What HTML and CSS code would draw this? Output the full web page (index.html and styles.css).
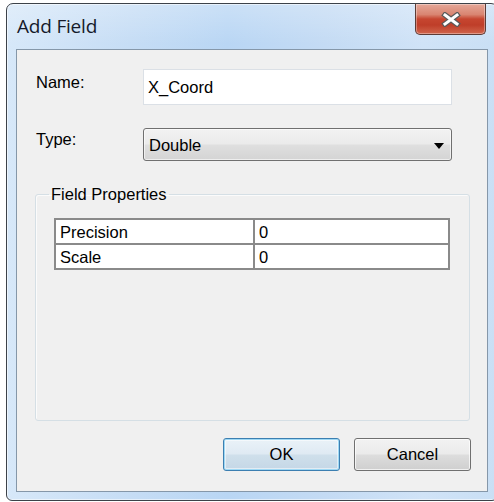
FILE: index.html
```html
<!DOCTYPE html>
<html lang="en">
<head>
<meta charset="utf-8">
<title>Add Field</title>
<link rel="stylesheet" href="styles.css">
</head>
<body>
<div class="window">
  <div class="titlebar">
    <span class="title">Add Field</span>
    <button class="close" type="button" aria-label="Close">
      <svg width="20" height="15" viewBox="0 0 20 15">
        <path d="M4 3 L16 12 M16 3 L4 12" stroke="#5a5a5a" stroke-width="5.4" stroke-linecap="square" fill="none"/>
        <path d="M4 3 L16 12 M16 3 L4 12" stroke="#ffffff" stroke-width="3" stroke-linecap="square" fill="none"/>
      </svg>
    </button>
  </div>
  <div class="client">
    <div class="form">
      <label class="label label-name">Name:</label>
      <div class="textbox">X_Coord</div>
      <label class="label label-type">Type:</label>
      <div class="combo">
        <span>Double</span>
        <svg class="arrow" width="10" height="6" viewBox="0 0 10 6"><polygon points="0,0 10,0 5,6" fill="#000"/></svg>
      </div>
    </div>
    <fieldset class="group">
      <legend>Field Properties</legend>
      <table class="props">
        <tr><td class="key">Precision</td><td>0</td></tr>
        <tr><td class="key">Scale</td><td>0</td></tr>
      </table>
    </fieldset>
    <div class="buttons">
      <button class="btn btn-default" type="button">OK</button>
      <button class="btn" type="button">Cancel</button>
    </div>
  </div>
</div>
</body>
</html>
```

FILE: styles.css
```css
* { box-sizing: border-box; }

html, body {
  margin: 0;
  padding: 0;
}

body {
  width: 494px;
  height: 502px;
  overflow: hidden;
  background: #ffffff;
  font-family: "Liberation Sans", Arial, sans-serif;
  font-size: 16.5px;
  color: #000;
}

/* Aero glass frame */
.window {
  margin: 3px 0 0 6px;
  width: 492px;
  height: 498px;
  border: 1px solid #3c4249;
  border-radius: 7px 7px 6px 6px;
  padding: 0 9px 8px 9px;
  display: flex;
  flex-direction: column;
  background:
    linear-gradient(180deg, rgba(255,255,255,0.25) 0, rgba(255,255,255,0) 40px),
    linear-gradient(90deg, #d7e8f9 0%, #c6ddf5 25%, #b9d6f4 45%, #c4dbf4 65%, #d0e3f7 85%, #c9dff5 100%);
  box-shadow: inset 0 0 0 1px rgba(255,255,255,0.55);
}

.titlebar {
  height: 45px;
  flex: none;
  display: flex;
  justify-content: space-between;
  align-items: flex-start;
  padding: 0 2px 0 1px;
}

.title {
  align-self: center;
  margin-top: -2px;
  font-family: "Open Sans", "Noto Sans", sans-serif;
  font-size: 19px;
  color: #151a2a;
  letter-spacing: -0.2px;
}

.close {
  width: 71px;
  height: 31px;
  margin: 0;
  padding: 0;
  border: 1px solid #5d3b35;
  border-top: none;
  border-radius: 0 0 5px 5px;
  display: flex;
  align-items: center;
  justify-content: center;
  background: linear-gradient(180deg, #e5a899 0%, #d98571 35%, #c64630 50%, #bf3e29 70%, #d0654c 100%);
  box-shadow: inset 0 0 0 1px rgba(255,255,255,0.35);
}

.close svg { display: block; margin-top: 1px; }

/* Dialog client area */
.client {
  height: 443px;
  flex: none;
  border: 1px solid #8597a9;
  background: #f0f0f0;
  padding: 19px 17px 20px 18px;
  display: flex;
  flex-direction: column;
}

.form {
  display: grid;
  grid-template-columns: 108px 309px;
  grid-template-rows: 36px 33px;
  row-gap: 23px;
}

.label {
  padding-left: 1px;
  line-height: 19px;
}

.label-name { padding-top: 4px; }
.label-type { padding-top: 2px; }

.textbox {
  border: 1px solid #dbe0e6;
  background: #ffffff;
  padding-left: 4px;
  display: flex;
  align-items: center;
}

.combo {
  border: 1px solid #707070;
  border-radius: 3px;
  background: linear-gradient(180deg, #f2f2f2 0%, #ebebeb 48%, #dfdfdf 52%, #d4d4d4 100%);
  padding: 1px 7px 0 5px;
  display: flex;
  align-items: center;
  justify-content: space-between;
  box-shadow: inset 0 0 0 1px rgba(255,255,255,0.6);
}

.combo .arrow { display: block; margin-top: 1px; }

/* Group box */
.group {
  flex: 1;
  min-width: 0;
  margin: 24px 0 0;
  padding: 0 18px;
  border: 1px solid #d5dfe5;
  border-radius: 3px;
  box-shadow: inset 1px 1px 0 #fbfbfb;
}

.group legend {
  margin-left: -5px;
  padding: 0 2px;
  line-height: 19px;
}

.props {
  margin-top: 14px;
  width: 396px;
  border-collapse: collapse;
  background: #ffffff;
  border: 2px solid #8a8a8a;
}

.props td {
  border: 2px solid #8a8a8a;
  padding: 2px 3px 1px 4px;
  line-height: 20px;
}

.props td.key { width: 199px; }

/* Button row */
.buttons {
  display: flex;
  justify-content: flex-end;
  gap: 14px;
  margin: 17px -1px 0 0;
}

.btn {
  width: 117px;
  height: 33px;
  margin: 0;
  padding: 0;
  font-family: "Liberation Sans", Arial, sans-serif;
  font-size: 16.5px;
  color: #000;
  border: 1px solid #707070;
  border-radius: 3px;
  background: linear-gradient(180deg, #f2f2f2 0%, #ebebeb 48%, #dddddd 52%, #cfcfcf 100%);
  box-shadow: inset 0 0 0 1px rgba(255,255,255,0.7);
}

.btn-default {
  border-color: #3c7fb1;
  background: linear-gradient(180deg, #eaf2f8 0%, #dfeaf3 48%, #cfdfeb 52%, #c4d7e6 100%);
  box-shadow: inset 0 0 0 1px #9ed8f4, inset 0 0 0 2px rgba(255,255,255,0.5);
}
```
